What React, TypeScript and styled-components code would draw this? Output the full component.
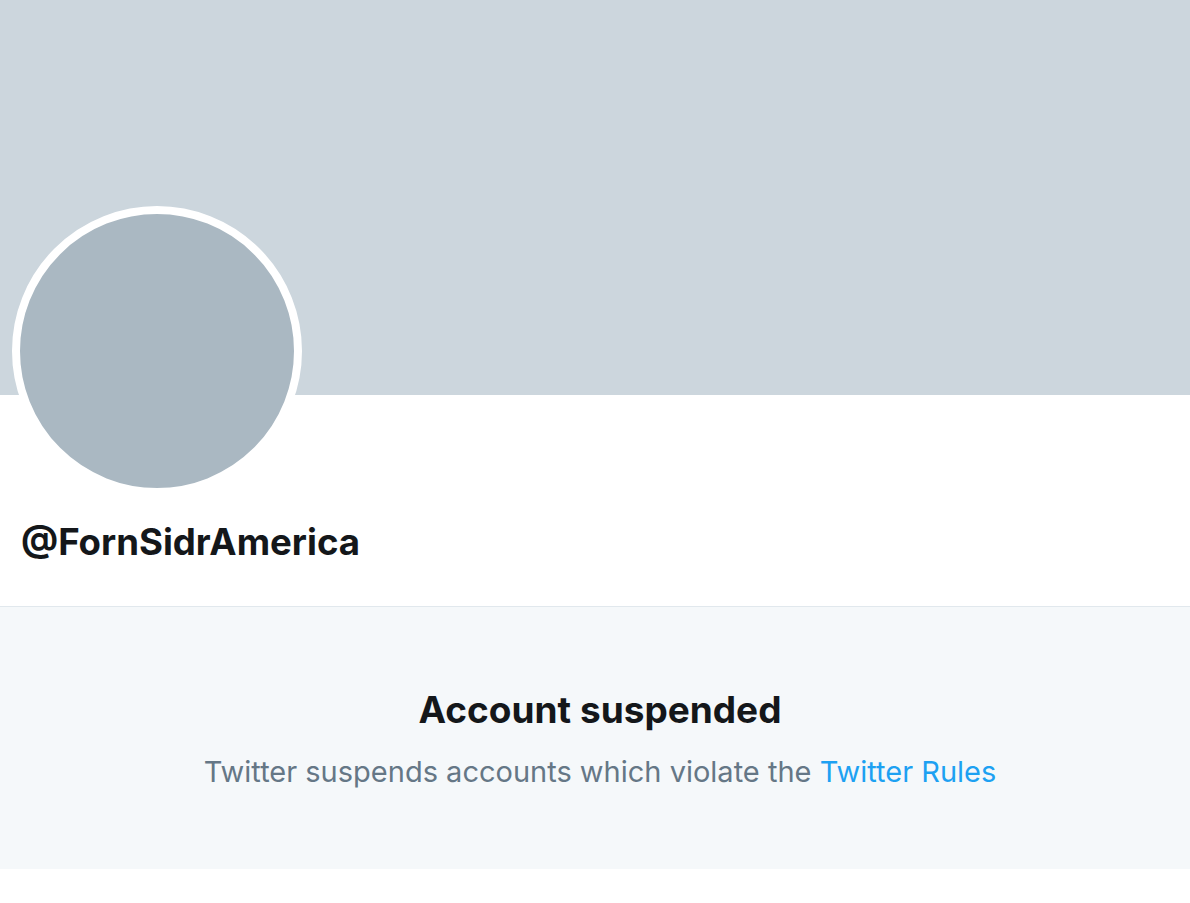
import React from "react";
import styled, { createGlobalStyle } from "styled-components";

const Global = createGlobalStyle`
  html, body { margin: 0; padding: 0; background: #ffffff; }
  body { font-family: Inter, "Liberation Sans", Arial, sans-serif; -webkit-font-smoothing: antialiased; }
`;

const Page = styled.div`
  width: 1190px;
  display: flex;
  flex-direction: column;
`;

const Banner = styled.div`
  height: 395px;
  background: #ccd6dd;
`;

const ProfileHeader = styled.div`
  display: flex;
  flex-direction: column;
  align-items: flex-start;
  padding: 0 0 0 12px;
  height: 211px;
  border-bottom: 1px solid #e1e8ed;
`;

const Avatar = styled.div`
  width: 274px;
  height: 274px;
  border-radius: 50%;
  background: #aab8c2;
  border: 8px solid #ffffff;
  margin-top: -189px;
  flex: none;
`;

const Handle = styled.h1`
  margin: 24px 0 0 9px;
  font-size: 36.6px;
  line-height: 44px;
  font-weight: 700;
  color: #14171a;
`;

const Notice = styled.section`
  height: 262px;
  background: #f5f8fa;
  display: flex;
  flex-direction: column;
  align-items: center;
  padding: 80px 0 0 10px;
  box-sizing: border-box;
`;

const Title = styled.h2`
  margin: 0;
  font-size: 37px;
  line-height: 46px;
  font-weight: 700;
  color: #14171a;
`;

const Message = styled.p`
  margin: 22px 0 0;
  font-size: 29px;
  line-height: 34px;
  color: #657786;
`;

const RulesLink = styled.a`
  color: #1da1f2;
  text-decoration: none;
`;

export default function App() {
  return (
    <Page>
      <Global />
      <Banner />
      <ProfileHeader>
        <Avatar />
        <Handle>@FornSidrAmerica</Handle>
      </ProfileHeader>
      <Notice>
        <Title>Account suspended</Title>
        <Message>
          Twitter suspends accounts which violate the{" "}
          <RulesLink href="#">Twitter Rules</RulesLink>
        </Message>
      </Notice>
    </Page>
  );
}
